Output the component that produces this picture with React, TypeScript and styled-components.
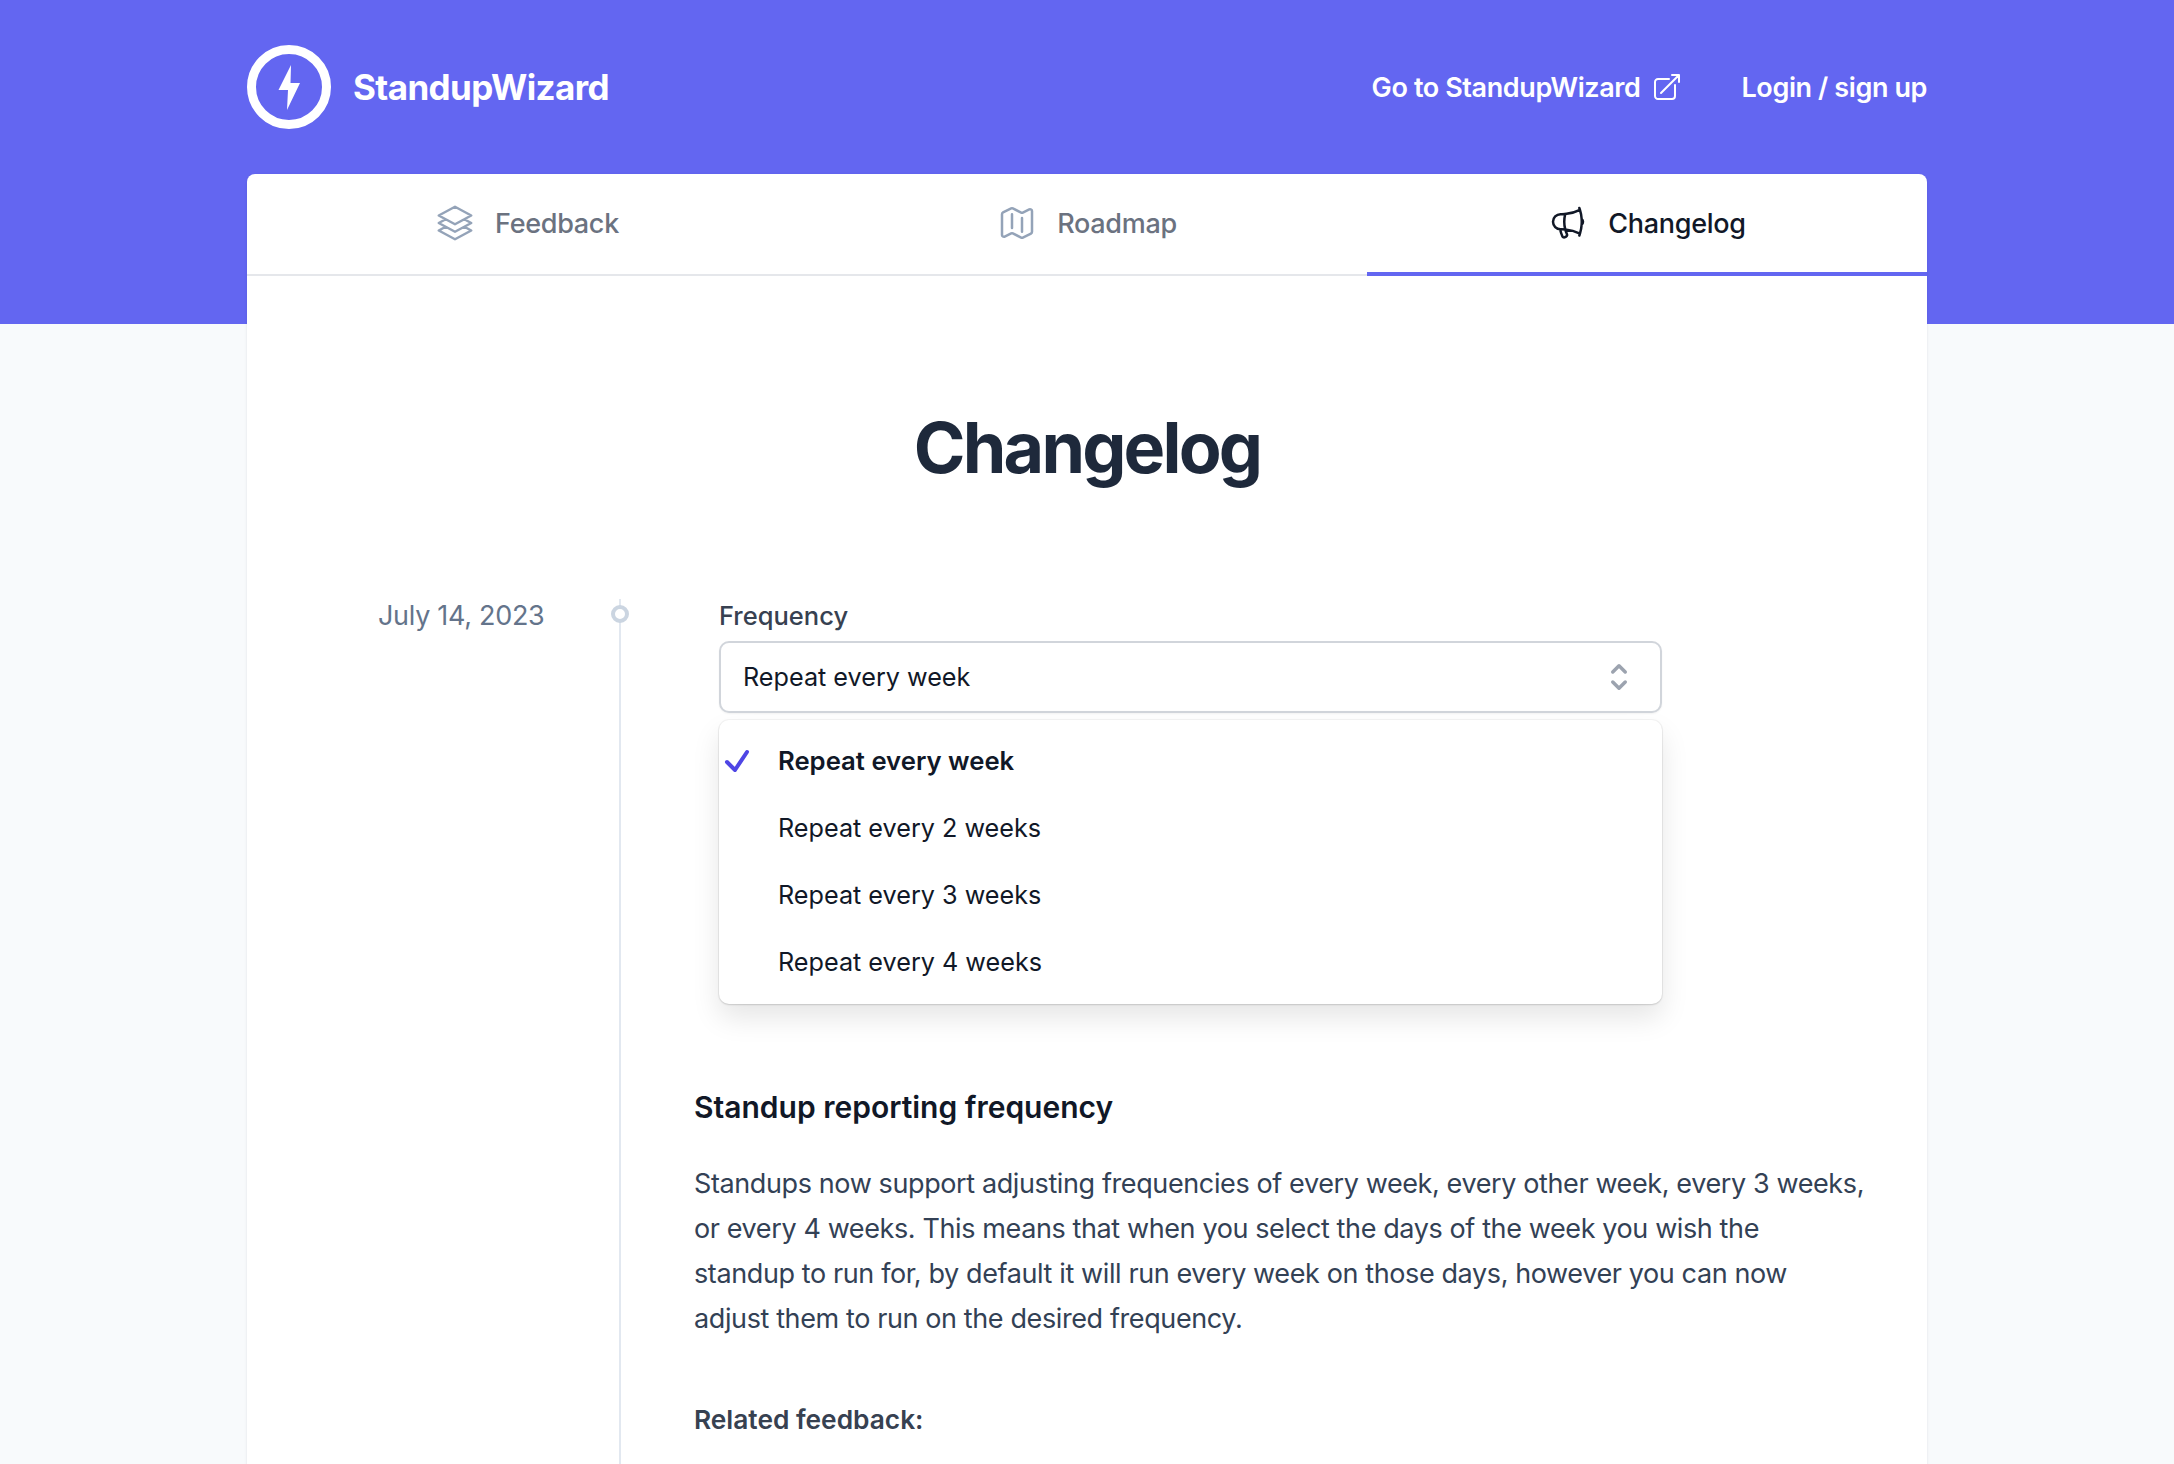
import styled, { createGlobalStyle } from "styled-components";
import {
  HiOutlineArrowTopRightOnSquare,
  HiOutlineCheck,
  HiOutlineChevronUpDown,
  HiOutlineMap,
  HiOutlineMegaphone,
  HiOutlineSquare3Stack3D,
} from "react-icons/hi2";

const GlobalStyle = createGlobalStyle`
  html, body {
    margin: 0;
    height: 100%;
    overflow: hidden;
    background: #f8fafc;
    font-family: "Inter", "Liberation Sans", sans-serif;
  }
  * { box-sizing: border-box; }
`;

const Page = styled.div`
  min-height: 1464px;
`;

const Banner = styled.div`
  height: 324px;
  background: #6366f1;
`;

const Container = styled.div`
  width: 1680px;
  margin: -324px auto 0;
`;

const TopBar = styled.header`
  height: 174px;
  display: flex;
  align-items: center;
  justify-content: space-between;
`;

const Brand = styled.div`
  display: flex;
  align-items: center;
  gap: 22px;
  font-size: 35px;
  font-weight: 700;
  color: #fff;
  letter-spacing: -0.6px;
`;

const TopLinks = styled.nav`
  display: flex;
  align-items: center;
  gap: 58px;
`;

const TopLink = styled.a`
  display: flex;
  align-items: center;
  gap: 11px;
  font-size: 27px;
  font-weight: 600;
  letter-spacing: -0.4px;
  color: #fff;
`;

const Card = styled.main`
  background: #fff;
  border-radius: 8px 8px 0 0;
  box-shadow: 0 1px 3px rgba(15, 23, 42, 0.1);
  min-height: 1290px;
`;

const Tabs = styled.div`
  display: grid;
  grid-template-columns: repeat(3, 1fr);
  border-bottom: 2px solid #e5e7eb;
  height: 102px;
`;

const Tab = styled.a<{ $active?: boolean }>`
  display: flex;
  align-items: center;
  justify-content: center;
  gap: 20px;
  height: 102px;
  font-size: 27px;
  font-weight: 500;
  letter-spacing: -0.3px;
  color: ${({ $active }) => ($active ? "#111827" : "#6b7280")};
  border-bottom: ${({ $active }) => ($active ? "4px solid #6366f1" : "none")};
  padding-bottom: ${({ $active }) => ($active ? "0" : "4px")};

  svg {
    color: ${({ $active }) => ($active ? "#111827" : "#94a3b8")};
  }
`;

const Title = styled.h1`
  margin: 0;
  padding-top: 124px;
  text-align: center;
  font-size: 70px;
  line-height: 96px;
  font-weight: 700;
  letter-spacing: -2.8px;
  color: #1e293b;
`;

const Timeline = styled.section`
  display: grid;
  grid-template-columns: 372px 1fr;
  margin-top: 103px;
`;

const DateLabel = styled.div`
  padding: 1px 0 0 131px;
  font-size: 27px;
  line-height: 32px;
  letter-spacing: -0.3px;
  color: #64748b;
`;

const Entry = styled.article`
  border-left: 2px solid #e2e8f0;
  position: relative;
  padding: 0 61px 0 73px;
  min-height: 900px;
`;

const Dot = styled.span`
  position: absolute;
  left: -10px;
  top: 6px;
  width: 18px;
  height: 18px;
  border: 4px solid #cbd5e1;
  border-radius: 50%;
  background: #fff;
`;

const Shot = styled.div`
  margin: 1px 0 0 25px;
  width: 943px;
`;

const FieldLabel = styled.div`
  font-size: 25.5px;
  line-height: 32px;
  font-weight: 500;
  color: #374151;
  margin-bottom: 9px;
`;

const SelectBox = styled.div`
  height: 72px;
  border: 2px solid #d1d5db;
  border-radius: 10px;
  display: flex;
  align-items: center;
  justify-content: space-between;
  padding: 0 21px 0 22px;
  font-size: 25.2px;
  color: #111827;
  background: #fff;
  box-shadow: 0 1px 2px rgba(0, 0, 0, 0.05);

  svg {
    color: #9ca3af;
  }
`;

const Options = styled.ul`
  list-style: none;
  margin: 7px 0 0;
  padding: 7px 0 9px;
  background: #fff;
  border-radius: 10px;
  box-shadow:
    0 14px 28px rgba(0, 0, 0, 0.1),
    0 1px 2px rgba(0, 0, 0, 0.12),
    0 0 0 1px rgba(0, 0, 0, 0.04);
`;

const Option = styled.li<{ $selected?: boolean }>`
  position: relative;
  height: 67px;
  display: flex;
  align-items: center;
  padding-left: 59px;
  font-size: ${({ $selected }) => ($selected ? "25.7px" : "25.2px")};
  font-weight: ${({ $selected }) => ($selected ? 600 : 400)};
  color: #111827;

  svg {
    position: absolute;
    left: 2px;
    color: #4f46e5;
  }
`;

const Heading = styled.h2`
  margin: 83px 0 0;
  font-size: 30px;
  line-height: 40px;
  font-weight: 600;
  color: #111827;
`;

const Body = styled.p`
  margin: 34px 0 0;
  font-size: 27px;
  line-height: 45px;
  letter-spacing: -0.39px;
  color: #334155;
`;

const Related = styled.h3`
  margin: 61px 0 0;
  font-size: 26.3px;
  line-height: 36px;
  font-weight: 600;
  color: #374151;
`;

function BoltLogo() {
  return (
    <svg width="84" height="84" viewBox="0 0 84 84" fill="none">
      <circle cx="42" cy="42" r="37.5" stroke="#fff" strokeWidth="9" />
      <path d="M44 20 L31.5 45 H41 L40 65 L53 38 H43.5 Z" fill="#fff" />
    </svg>
  );
}

const options = ["Repeat every week", "Repeat every 2 weeks", "Repeat every 3 weeks", "Repeat every 4 weeks"];

export default function App() {
  return (
    <Page>
      <GlobalStyle />
      <Banner />
      <Container>
        <TopBar>
          <Brand>
            <BoltLogo />
            StandupWizard
          </Brand>
          <TopLinks>
            <TopLink>
              Go to StandupWizard
              <HiOutlineArrowTopRightOnSquare size={32} />
            </TopLink>
            <TopLink>Login / sign up</TopLink>
          </TopLinks>
        </TopBar>
        <Card>
          <Tabs>
            <Tab>
              <HiOutlineSquare3Stack3D size={40} />
              Feedback
            </Tab>
            <Tab>
              <HiOutlineMap size={40} />
              Roadmap
            </Tab>
            <Tab $active>
              <HiOutlineMegaphone size={40} />
              Changelog
            </Tab>
          </Tabs>
          <Title>Changelog</Title>
          <Timeline>
            <DateLabel>July 14, 2023</DateLabel>
            <Entry>
              <Dot />
              <Shot>
                <FieldLabel>Frequency</FieldLabel>
                <SelectBox>
                  Repeat every week
                  <HiOutlineChevronUpDown size={40} strokeWidth={2.1} />
                </SelectBox>
                <Options>
                  {options.map((label, i) => (
                    <Option key={label} $selected={i === 0}>
                      {i === 0 && <HiOutlineCheck size={32} strokeWidth={3} />}
                      {label}
                    </Option>
                  ))}
                </Options>
              </Shot>
              <Heading>Standup reporting frequency</Heading>
              <Body>
                Standups now support adjusting frequencies of every week, every other week, every 3 weeks, or every 4
                weeks. This means that when you select the days of the week you wish the standup to run for, by default
                it will run every week on those days, however you can now adjust them to run on the desired frequency.
              </Body>
              <Related>Related feedback:</Related>
            </Entry>
          </Timeline>
        </Card>
      </Container>
    </Page>
  );
}
